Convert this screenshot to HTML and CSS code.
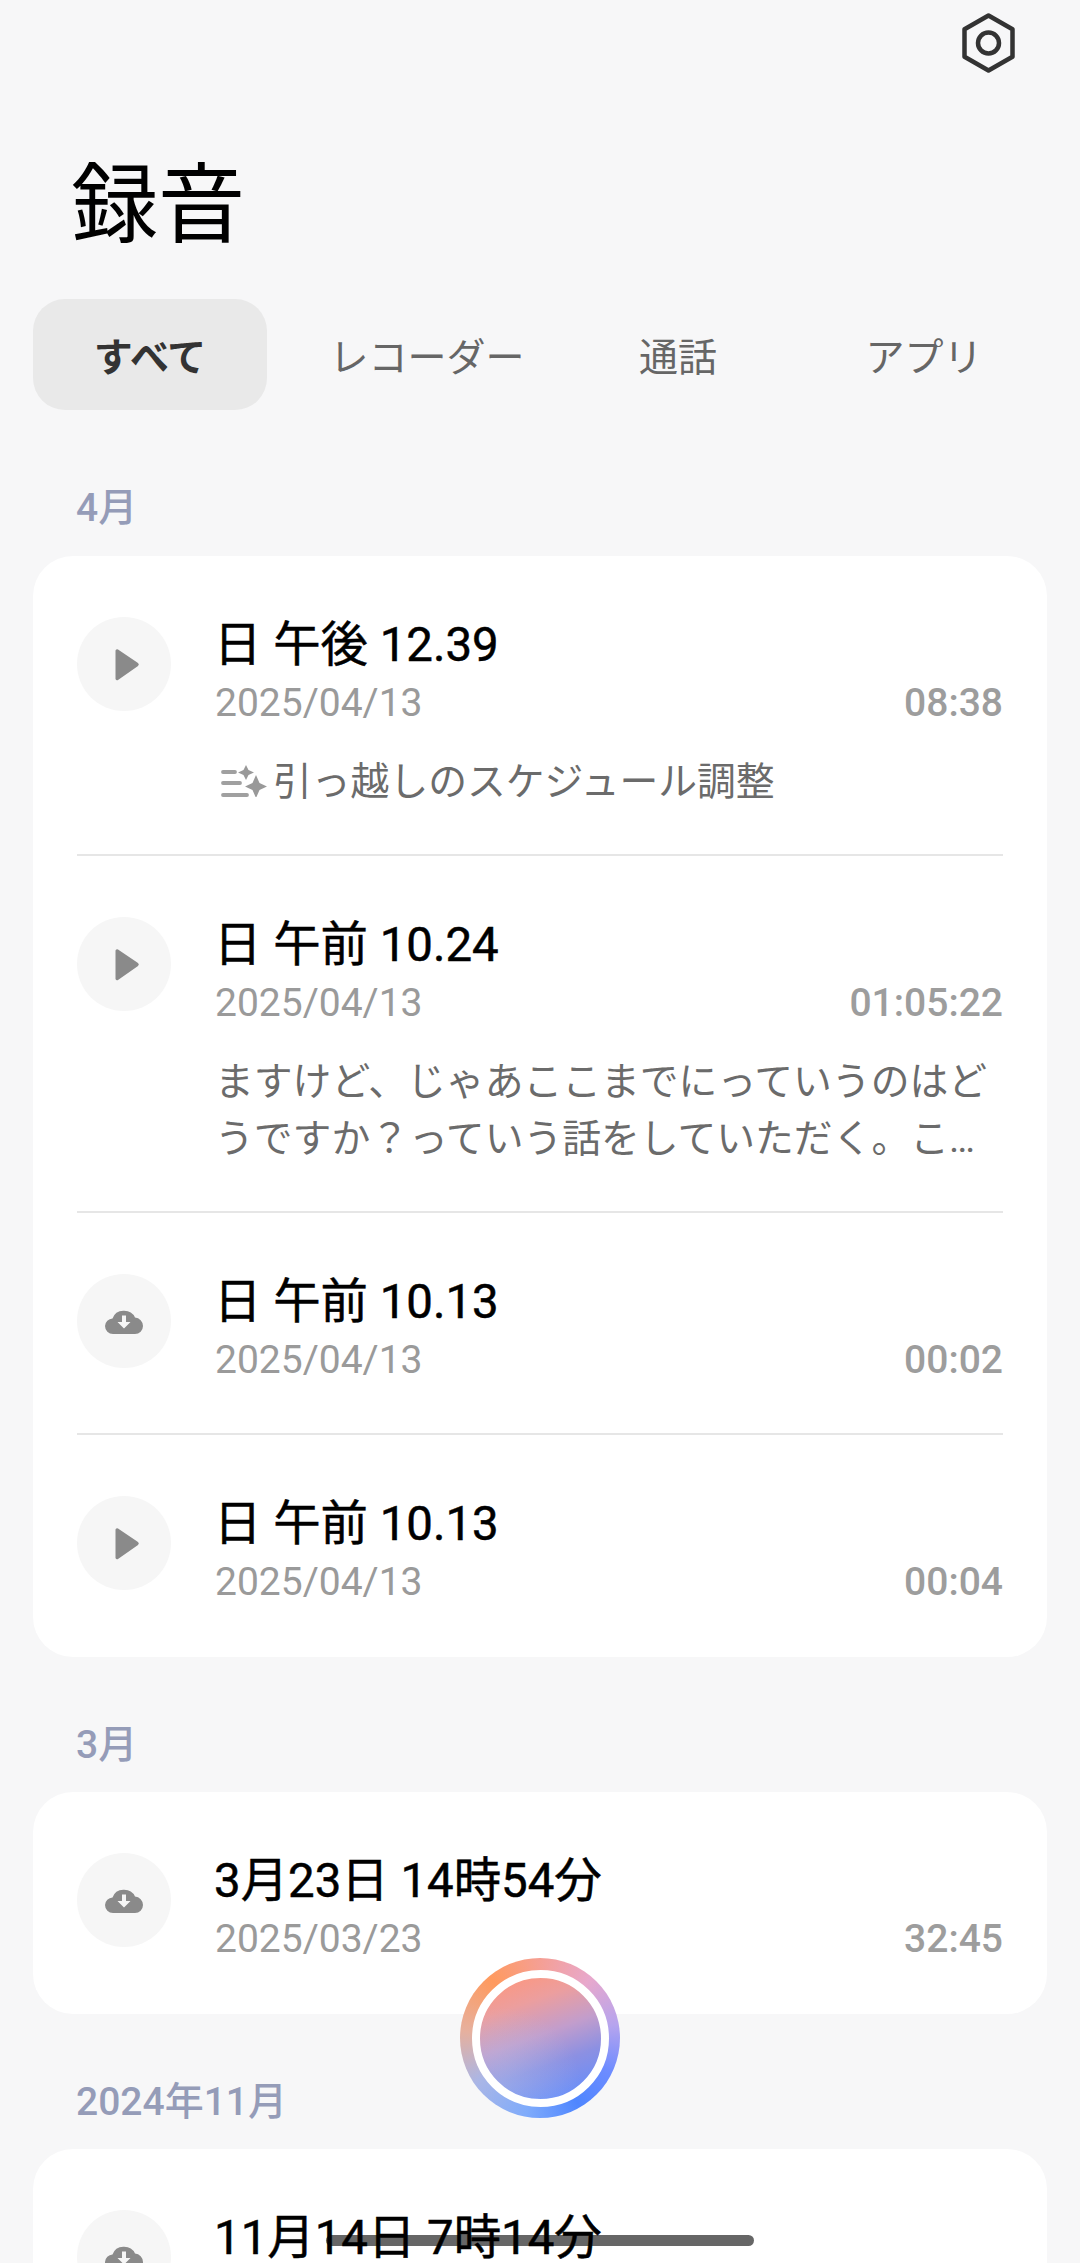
FILE: index.html
```html
<!DOCTYPE html>
<html lang="ja">
<head>
<meta charset="utf-8">
<title>録音</title>
<link rel="stylesheet" href="styles.css">
</head>
<body>
<svg class="defs" width="0" height="0" aria-hidden="true">
  <symbol id="play" viewBox="0 0 24 33"><path d="M2.500 1.500 22.500 15a2 2 0 0 1 0 3L2.500 32A1.600 1.600 0 0 1 0 30.700V2.800A1.600 1.600 0 0 1 2.500 1.500Z" fill="#8a8a8a"/></symbol>
  <symbol id="cloud" viewBox="0 0 38 26"><path d="M8 26A8 8 0 0 1 0 18 8 8 0 0 1 7.500 10.500 12 11 0 0 1 30 9.500 8.500 8.500 0 0 1 38 18 8 8 0 0 1 30 26Z" fill="#8a8a8a"/><path d="M17 7.500h4V14h4.500L19 20.500 12.500 14H17Z" fill="#f6f6f6"/></symbol>
</svg>
<div class="page">
  <header class="topbar">
    <svg class="settings" viewBox="0 0 53 60" aria-label="設定">
      <path d="M26.500 2.500 50.500 16.300V43.700L26.500 57.500 2.500 43.700V16.300Z" fill="none" stroke="#333" stroke-width="4.500" stroke-linejoin="round"/>
      <circle cx="26.500" cy="30" r="10.500" fill="none" stroke="#333" stroke-width="4.500"/>
    </svg>
  </header>
  <h1 class="title">録音</h1>
  <nav class="tabs">
    <span class="tab active">すべて</span>
    <span class="tab">レコーダー</span>
    <span class="tab">通話</span>
    <span class="tab">アプリ</span>
  </nav>

  <h2 class="section">4月</h2>
  <section class="card">
    <article class="row">
      <div class="circle"><svg class="ico-play"><use href="#play"/></svg></div>
      <div class="body">
        <div class="name">日 午後 12.39</div>
        <div class="meta"><span class="date">2025/04/13</span><span class="dur">08:38</span></div>
        <p class="summary"><svg class="spark" viewBox="0 0 46 32" aria-hidden="true">
            <path d="M2 7h12M2 18h17M2 30h24" stroke="#a0a0a0" stroke-width="3.800" stroke-linecap="round" fill="none"/>
            <path d="M25 0 27.500 5 33 7.500 27.500 10 25 15 22.500 10 17 7.500 22.500 5Z" fill="#999"/>
            <path d="M35 10 38.500 18 46 21.500 38.500 25 35 33 31.500 25 24 21.500 31.500 18Z" fill="#999"/>
          </svg>引っ越しのスケジュール調整</p>
      </div>
    </article>
    <article class="row">
      <div class="circle"><svg class="ico-play"><use href="#play"/></svg></div>
      <div class="body">
        <div class="name">日 午前 10.24</div>
        <div class="meta"><span class="date">2025/04/13</span><span class="dur">01:05:22</span></div>
        <p class="summary">ますけど、じゃあここまでにっていうのはどうですか？っていう話をしていただく。こ…</p>
      </div>
    </article>
    <article class="row">
      <div class="circle"><svg class="ico-cloud"><use href="#cloud"/></svg></div>
      <div class="body">
        <div class="name">日 午前 10.13</div>
        <div class="meta"><span class="date">2025/04/13</span><span class="dur">00:02</span></div>
      </div>
    </article>
    <article class="row">
      <div class="circle"><svg class="ico-play"><use href="#play"/></svg></div>
      <div class="body">
        <div class="name">日 午前 10.13</div>
        <div class="meta"><span class="date">2025/04/13</span><span class="dur">00:04</span></div>
      </div>
    </article>
  </section>

  <h2 class="section">3月</h2>
  <section class="card">
    <article class="row">
      <div class="circle"><svg class="ico-cloud"><use href="#cloud"/></svg></div>
      <div class="body">
        <div class="name">3月23日 14時54分</div>
        <div class="meta"><span class="date">2025/03/23</span><span class="dur">32:45</span></div>
      </div>
    </article>
  </section>

  <h2 class="section">2024年11月</h2>
  <section class="card">
    <article class="row">
      <div class="circle"><svg class="ico-cloud"><use href="#cloud"/></svg></div>
      <div class="body">
        <div class="name">11月14日 7時14分</div>
      </div>
    </article>
  </section>

  <div class="record"><div class="record-inner"></div></div>
  <div class="homebar"></div>
</div>
</body>
</html>
```

FILE: styles.css
```css
html, body {
  margin: 0;
  padding: 0;
  background: #f7f7f8;
}
.defs {
  position: absolute;
}
.page {
  position: relative;
  width: 1080px;
  height: 2263px;
  overflow: hidden;
  background: #f7f7f8;
  font-family: Roboto, "Noto Sans CJK JP", sans-serif;
}
.topbar {
  display: flex;
  justify-content: flex-end;
  padding: 13px 65px 0 0;
  height: 90px;
  box-sizing: border-box;
}
.settings {
  width: 53px;
  height: 60px;
}
.title {
  margin: 0 0 0 71px;
  height: 197px;
  padding-top: 12px;
  font-size: 87px;
  line-height: 209px;
  font-weight: 400;
  color: #000;
}
.tabs {
  display: grid;
  grid-template-columns: 234px 320px 182px 310px;
  margin: 0 0 0 33px;
  height: 111px;
}
.tab {
  display: flex;
  align-items: center;
  justify-content: center;
  padding-bottom: 2px;
  box-sizing: border-box;
  font-size: 39px;
  color: #666;
}
.active {
  background: #e9e9e9;
  border-radius: 32px;
  color: #333;
  font-weight: 700;
}
.section {
  margin: 64px 0 22px 76px;
  height: 49px;
  font-size: 39px;
  line-height: 49px;
  font-weight: 500;
  color: #959cb8;
}
.tabs + .section {
  margin-top: 74px;
  margin-bottom: 23px;
}
.card {
  margin: 0 33px;
  background: #fff;
  border-radius: 40px;
  padding: 0 44px;
}
.row {
  display: flex;
  gap: 44px;
  padding: 60px 0 44px;
  border-bottom: 2px solid #e6e6e6;
}
.row:last-child {
  border-bottom: 0;
  padding-bottom: 46px;
}
.circle {
  flex: none;
  display: flex;
  align-items: center;
  justify-content: center;
  width: 94px;
  height: 94px;
  margin-top: 1px;
  border-radius: 50%;
  background: #f6f6f6;
}
.ico-play {
  width: 25px;
  height: 33px;
  margin-left: 6px;
}
.ico-cloud {
  width: 38px;
  height: 26px;
}
.body {
  flex: 1;
  min-width: 0;
}
.name {
  margin-left: -1px;
  height: 58px;
  font-size: 47.400px;
  line-height: 58px;
  font-weight: 400;
  -webkit-text-stroke: 0.5px #000;
  color: #000;
}
.meta {
  display: flex;
  justify-content: space-between;
  height: 58px;
  font-size: 39px;
  line-height: 58px;
}
.date {
  color: #9a9a9a;
}
.dur {
  color: #9d9d9d;
  font-weight: 500;
}
.summary {
  margin: 21px 0 0;
  font-size: 38.800px;
  line-height: 57px;
  color: #6b6b6b;
}
.spark {
  width: 46px;
  height: 32px;
  margin: 0 6px;
  vertical-align: -2px;
}
.record {
  position: absolute;
  left: 460px;
  top: 1958px;
  width: 160px;
  height: 160px;
  box-sizing: border-box;
  padding: 11.500px;
  border-radius: 50%;
  background: conic-gradient(#f59f94 0deg, #e8a8cc 40deg, #b6a4ee 80deg, #6e8cff 115deg, #4f86ff 150deg, #7fabfb 190deg, #aab6e6 235deg, #e6b09e 275deg, #ff9a5e 320deg, #f59f94 360deg);
}
.record-inner {
  width: 137px;
  height: 137px;
  box-sizing: border-box;
  border: 8px solid #fff;
  border-radius: 50%;
  background: radial-gradient(circle at 22% 85%, rgba(180, 210, 240, 0.35), transparent 50%) border-box, linear-gradient(160deg, #ff967a 8%, #ec9e9e 28%, #c29dcc 48%, #8c90e2 66%, #5f8dff 92%) border-box;
}
.homebar {
  position: absolute;
  left: 326px;
  top: 2235px;
  width: 428px;
  height: 11px;
  border-radius: 6px;
  background: rgba(0, 0, 0, 0.6);
}
```
